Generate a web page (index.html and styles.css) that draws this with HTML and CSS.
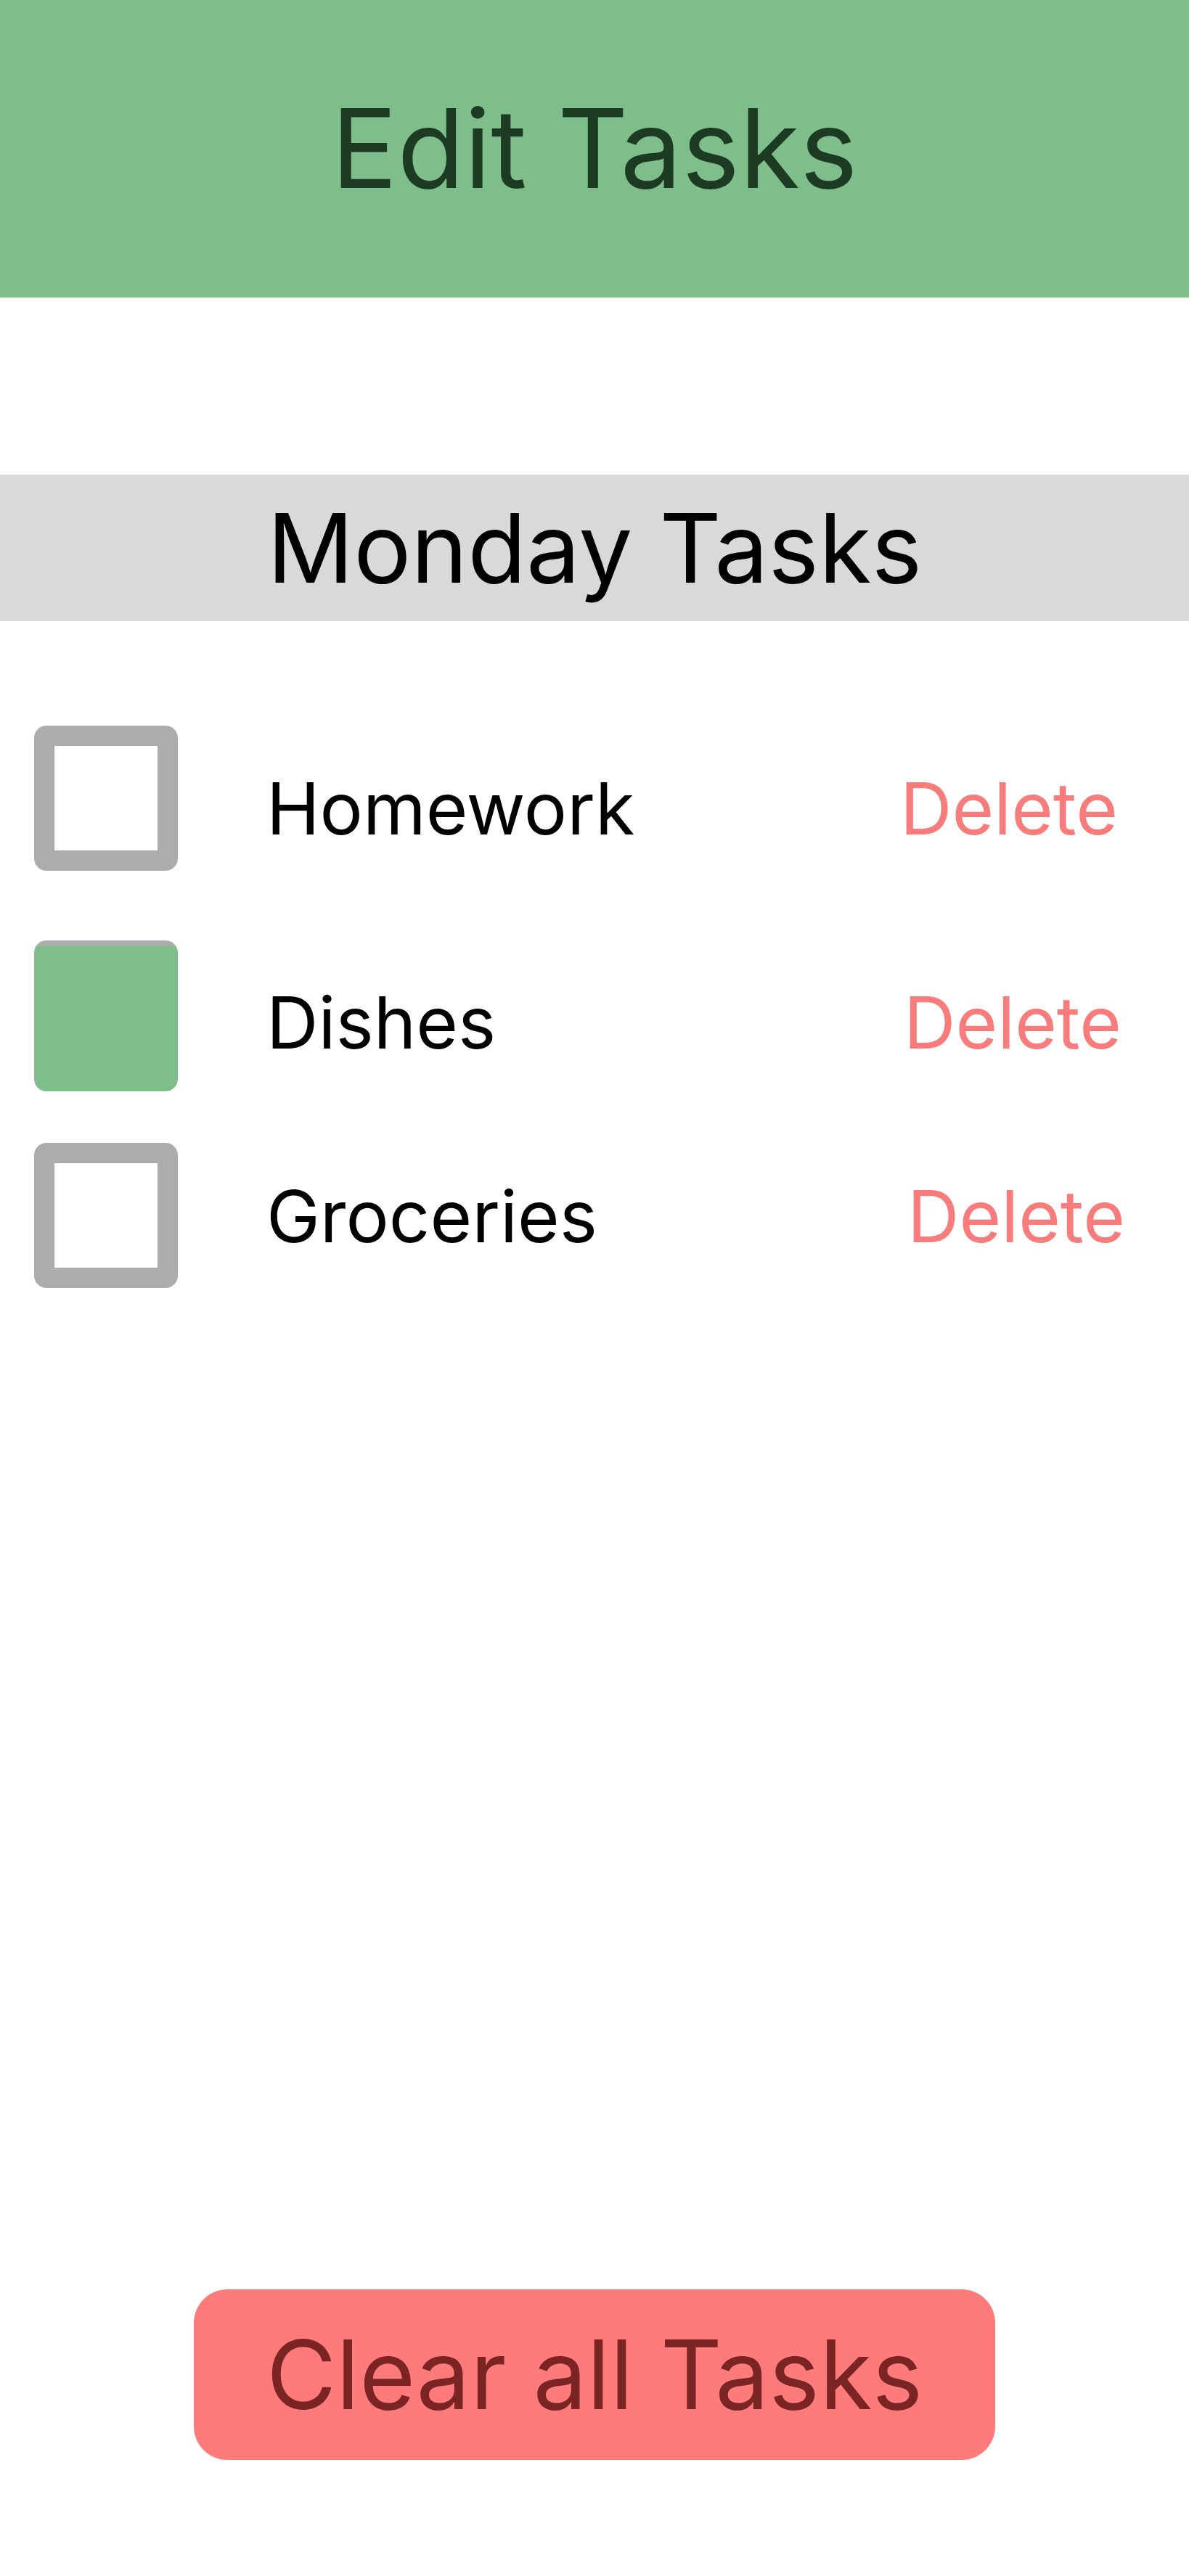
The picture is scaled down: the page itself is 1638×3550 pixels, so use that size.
FILE: index.html
```html
<!DOCTYPE html>
<html lang="en">
<head>
<meta charset="utf-8">
<title>Edit Tasks</title>
<link rel="stylesheet" href="styles.css">
</head>
<body>
  <header class="app-header">
    <h1 class="app-title">Edit Tasks</h1>
  </header>

  <section class="day">
    <h2 class="day-title">Monday Tasks</h2>
  </section>

  <ul class="tasks">
    <li class="task task-1">
      <span class="check"></span>
      <span class="task-name">Homework</span>
      <span class="task-delete">Delete</span>
    </li>
    <li class="task task-2">
      <span class="check check-done"></span>
      <span class="task-name">Dishes</span>
      <span class="task-delete">Delete</span>
    </li>
    <li class="task task-3">
      <span class="check"></span>
      <span class="task-name">Groceries</span>
      <span class="task-delete">Delete</span>
    </li>
  </ul>

  <div class="actions">
    <button class="clear-btn" type="button">Clear all Tasks</button>
  </div>
</body>
</html>
```
FILE: styles.css
```css
* { box-sizing: border-box; }

html, body {
  margin: 0;
  padding: 0;
  background: #ffffff;
}

body {
  font-family: Inter, "Noto Sans", "Liberation Sans", sans-serif;
  width: 1638px;
  min-height: 3550px;
}

.app-header {
  height: 410px;
  background: #7dbe8a;
  display: flex;
  align-items: center;
  justify-content: center;
}

.app-title {
  margin: 0;
  font-size: 151px;
  font-weight: 400;
  line-height: 1.2;
  color: #1d3a22;
}

.day {
  margin-top: 244px;
  height: 202px;
  background: #d9d9d9;
  display: flex;
  align-items: center;
  justify-content: center;
}

.day-title {
  margin: 0;
  font-size: 132px;
  font-weight: 400;
  line-height: 1.2;
  color: #000000;
}

.tasks {
  list-style: none;
  margin: 0;
  padding: 0;
}

.task {
  display: flex;
  align-items: flex-start;
  padding-left: 47px;
}

.task-1 { margin-top: 144px; padding-right: 98px; }
.task-2 { margin-top: 96px; padding-right: 93px; }
.task-3 { margin-top: 71px; padding-right: 88px; }

.check {
  flex: none;
  width: 198px;
  height: 200px;
  border: 28px solid #acacac;
  border-radius: 17px;
  background: #ffffff;
}

.check-done {
  height: 208px;
  border: none;
  background: linear-gradient(#acacac 0 8px, #7dbe8a 8px);
}

.task-name {
  margin-left: 122px;
  font-size: 99px;
  line-height: 120px;
  color: #000000;
}

.task-delete {
  margin-left: auto;
  font-size: 99px;
  line-height: 120px;
  color: #f87c7c;
}

.task-1 .task-name, .task-1 .task-delete { margin-top: 54px; }
.task-2 .task-name, .task-2 .task-delete { margin-top: 53px; }
.task-3 .task-name, .task-3 .task-delete { margin-top: 41px; }

.actions {
  display: flex;
  justify-content: center;
  margin-top: 1380px;
}

.clear-btn {
  width: 1104px;
  height: 235px;
  border: none;
  border-radius: 46px;
  background: #ff7b7b;
  color: #7a2424;
  font-family: Inter, "Noto Sans", "Liberation Sans", sans-serif;
  font-size: 132px;
  font-weight: 400;
  line-height: 1.2;
  padding: 0;
}
```
